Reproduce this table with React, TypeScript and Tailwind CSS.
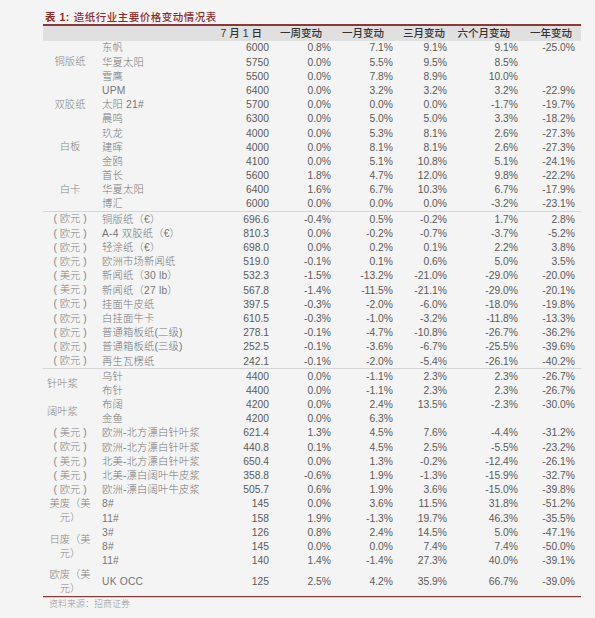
import React from "react";

type Row = string[];
type Group = { label?: React.ReactNode; left?: boolean; tall?: boolean; rows: Row[] };

const section1: Group[] = [
  {
    label: "铜版纸",
    rows: [
      ["东帆", "6000", "0.8%", "7.1%", "9.1%", "9.1%", "-25.0%"],
      ["华夏太阳", "5750", "0.0%", "5.5%", "9.5%", "8.5%", ""],
      ["雪鹰", "5500", "0.0%", "7.8%", "8.9%", "10.0%", ""],
    ],
  },
  {
    label: "双胶纸",
    rows: [
      ["UPM", "6400", "0.0%", "3.2%", "3.2%", "3.2%", "-22.9%"],
      ["太阳 21#", "5700", "0.0%", "0.0%", "0.0%", "-1.7%", "-19.7%"],
      ["晨鸣", "6300", "0.0%", "5.0%", "5.0%", "3.3%", "-18.2%"],
    ],
  },
  {
    label: "白板",
    rows: [
      ["玖龙", "4000", "0.0%", "5.3%", "8.1%", "2.6%", "-27.3%"],
      ["建晖", "4000", "0.0%", "8.1%", "8.1%", "2.6%", "-27.3%"],
      ["金鸥", "4100", "0.0%", "5.1%", "10.8%", "5.1%", "-24.1%"],
    ],
  },
  {
    label: "白卡",
    rows: [
      ["首长", "5600", "1.8%", "4.7%", "12.0%", "9.8%", "-22.2%"],
      ["华夏太阳", "6400", "1.6%", "6.7%", "10.3%", "6.7%", "-17.9%"],
      ["博汇", "6000", "0.0%", "0.0%", "0.0%", "-3.2%", "-23.1%"],
    ],
  },
];

const EUR = "( 欧元 )";
const USD = "( 美元 )";

const section2: Group[] = [
  { label: EUR, rows: [["铜版纸（€）", "696.6", "-0.4%", "0.5%", "-0.2%", "1.7%", "2.8%"]] },
  { label: EUR, rows: [["A-4 双胶纸（€）", "810.3", "0.0%", "-0.2%", "-0.7%", "-3.7%", "-5.2%"]] },
  { label: EUR, rows: [["轻涂纸（€）", "698.0", "0.0%", "0.2%", "0.1%", "2.2%", "3.8%"]] },
  { label: EUR, rows: [["欧洲市场新闻纸", "519.0", "-0.1%", "0.1%", "0.6%", "5.0%", "3.5%"]] },
  { label: USD, rows: [["新闻纸（30 lb）", "532.3", "-1.5%", "-13.2%", "-21.0%", "-29.0%", "-20.0%"]] },
  { label: USD, rows: [["新闻纸（27 lb）", "567.8", "-1.4%", "-11.5%", "-21.1%", "-29.0%", "-20.1%"]] },
  { label: EUR, rows: [["挂面牛皮纸", "397.5", "-0.3%", "-2.0%", "-6.0%", "-18.0%", "-19.8%"]] },
  { label: EUR, rows: [["白挂面牛卡", "610.5", "-0.3%", "-1.0%", "-3.2%", "-11.8%", "-13.3%"]] },
  { label: EUR, rows: [["普通箱板纸(二级)", "278.1", "-0.1%", "-4.7%", "-10.8%", "-26.7%", "-36.2%"]] },
  { label: EUR, rows: [["普通箱板纸(三级)", "252.5", "-0.1%", "-3.6%", "-6.7%", "-25.5%", "-39.6%"]] },
  { label: EUR, rows: [["再生瓦楞纸", "242.1", "-0.1%", "-2.0%", "-5.4%", "-26.1%", "-40.2%"]] },
];

const twoLine = (a: string) => (
  <>
    {a}（美
    <br />
    元）
  </>
);

const section3: Group[] = [
  {
    label: "针叶浆",
    left: true,
    rows: [
      ["乌针", "4400", "0.0%", "-1.1%", "2.3%", "2.3%", "-26.7%"],
      ["布针", "4400", "0.0%", "-1.1%", "2.3%", "2.3%", "-26.7%"],
    ],
  },
  {
    label: "阔叶浆",
    left: true,
    rows: [
      ["布阔", "4200", "0.0%", "2.4%", "13.5%", "-2.3%", "-30.0%"],
      ["金鱼", "4200", "0.0%", "6.3%", "", "", ""],
    ],
  },
  { label: USD, rows: [["欧洲-北方漂白针叶浆", "621.4", "1.3%", "4.5%", "7.6%", "-4.4%", "-31.2%"]] },
  { label: EUR, rows: [["欧洲-北方漂白针叶浆", "440.8", "0.1%", "4.5%", "2.5%", "-5.5%", "-23.2%"]] },
  { label: USD, rows: [["北美-北方漂白针叶浆", "650.4", "0.0%", "1.3%", "-0.2%", "-12.4%", "-26.1%"]] },
  { label: USD, rows: [["北美-漂白阔叶牛皮浆", "358.8", "-0.6%", "1.9%", "-1.3%", "-15.9%", "-32.7%"]] },
  { label: EUR, rows: [["欧洲-漂白阔叶牛皮浆", "505.7", "0.6%", "1.9%", "3.6%", "-15.0%", "-39.8%"]] },
  {
    label: twoLine("美废"),
    rows: [
      ["8#", "145", "0.0%", "3.6%", "11.5%", "31.8%", "-51.2%"],
      ["11#", "158", "1.9%", "-1.3%", "19.7%", "46.3%", "-35.5%"],
    ],
  },
  {
    label: twoLine("日废"),
    rows: [
      ["3#", "126", "0.8%", "2.4%", "14.5%", "5.0%", "-47.1%"],
      ["8#", "145", "0.0%", "0.0%", "7.4%", "7.4%", "-50.0%"],
      ["11#", "140", "1.4%", "-1.4%", "27.3%", "40.0%", "-39.1%"],
    ],
  },
  {
    label: twoLine("欧废"),
    tall: true,
    rows: [["UK OCC", "125", "2.5%", "4.2%", "35.9%", "66.7%", "-39.0%"]],
  },
];

// widths of the number columns (right aligned)
const numW = ["w-[49px]", "w-[62px]", "w-[62px]", "w-[54px]", "w-[71px]", "w-[57px]"];

function DataRow({ row, tall }: { row: Row; tall?: boolean }) {
  return (
    <div className={`flex items-center ${tall ? "h-[27px]" : "h-[14.2px]"}`}>
      <div className="w-[123px] pl-[5px] whitespace-nowrap text-[#777] font-light tracking-[0.2px]">{row[0]}</div>
      {row.slice(1).map((v, i) => (
        <div key={i} className={`${numW[i]} text-right text-[#5a5a5a]`}>
          {v}
        </div>
      ))}
    </div>
  );
}

function Section({ groups }: { groups: Group[] }) {
  return (
    <div className="flex flex-col">
      {groups.map((g, gi) => (
        <div key={gi} className="flex">
          <div
            className={`w-[54px] flex items-center leading-[14px] text-[#858585] font-light whitespace-nowrap ${
              g.left ? "justify-start pl-[4px]" : "justify-center text-center"
            }`}
          >
            <div>{g.label}</div>
          </div>
          <div className="flex flex-col">
            {g.rows.map((r, ri) => (
              <DataRow key={ri} row={r} tall={g.tall} />
            ))}
          </div>
        </div>
      ))}
    </div>
  );
}

export default function App() {
  return (
    <div className="min-h-screen w-[595px] bg-[#f4f4f4] font-['Liberation_Sans','Noto_Sans_CJK_SC',sans-serif] text-[10.3px]">
      <div className="ml-[43px] w-[538px] pt-[10px]">
        {/* Title */}
        <div className="h-[14px] leading-[14px] pl-[2px] text-[10.5px] text-[#8f2a2a] font-medium whitespace-nowrap tracking-[0.5px]">
          <span className="font-bold">表 1:</span>
          <span className="ml-[4px]">造纸行业主要价格变动情况表</span>
        </div>
        <div className="h-[1.5px] bg-[#8b3838]" />
        <div className="h-[0.5px] bg-[#d8c8c8]" />

        {/* Header */}
        <div className="flex h-[15px] items-center bg-[#e0e0e0] text-[10.5px] text-[#333] font-medium whitespace-nowrap">
          <div className="w-[54px]" />
          <div className="w-[123px]" />
          <div className="w-[49px] text-right pr-[7px]">7 月 1 日</div>
          <div className="w-[62px] text-right pr-[9px]">一周变动</div>
          <div className="w-[62px] text-right pr-[9px]">一月变动</div>
          <div className="w-[54px] text-right pr-[2px]">三月变动</div>
          <div className="w-[71px] text-right pr-[8px]">六个月变动</div>
          <div className="w-[57px] text-right pr-[3px]">一年变动</div>
        </div>

        <Section groups={section1} />
        <div className="h-[1px] bg-[#d6d6d6]" />
        <Section groups={section2} />
        <div className="h-[1px] bg-[#d6d6d6]" />
        <Section groups={section3} />

        <div className="h-[1.5px] bg-[#8b3838]" />
        <div className="h-[0.5px] bg-[#d8c8c8]" />
        <div className="mt-[1px] pl-[6px] leading-[10px] text-[9px] text-[#999] font-light">资料来源：招商证券</div>
      </div>
    </div>
  );
}
